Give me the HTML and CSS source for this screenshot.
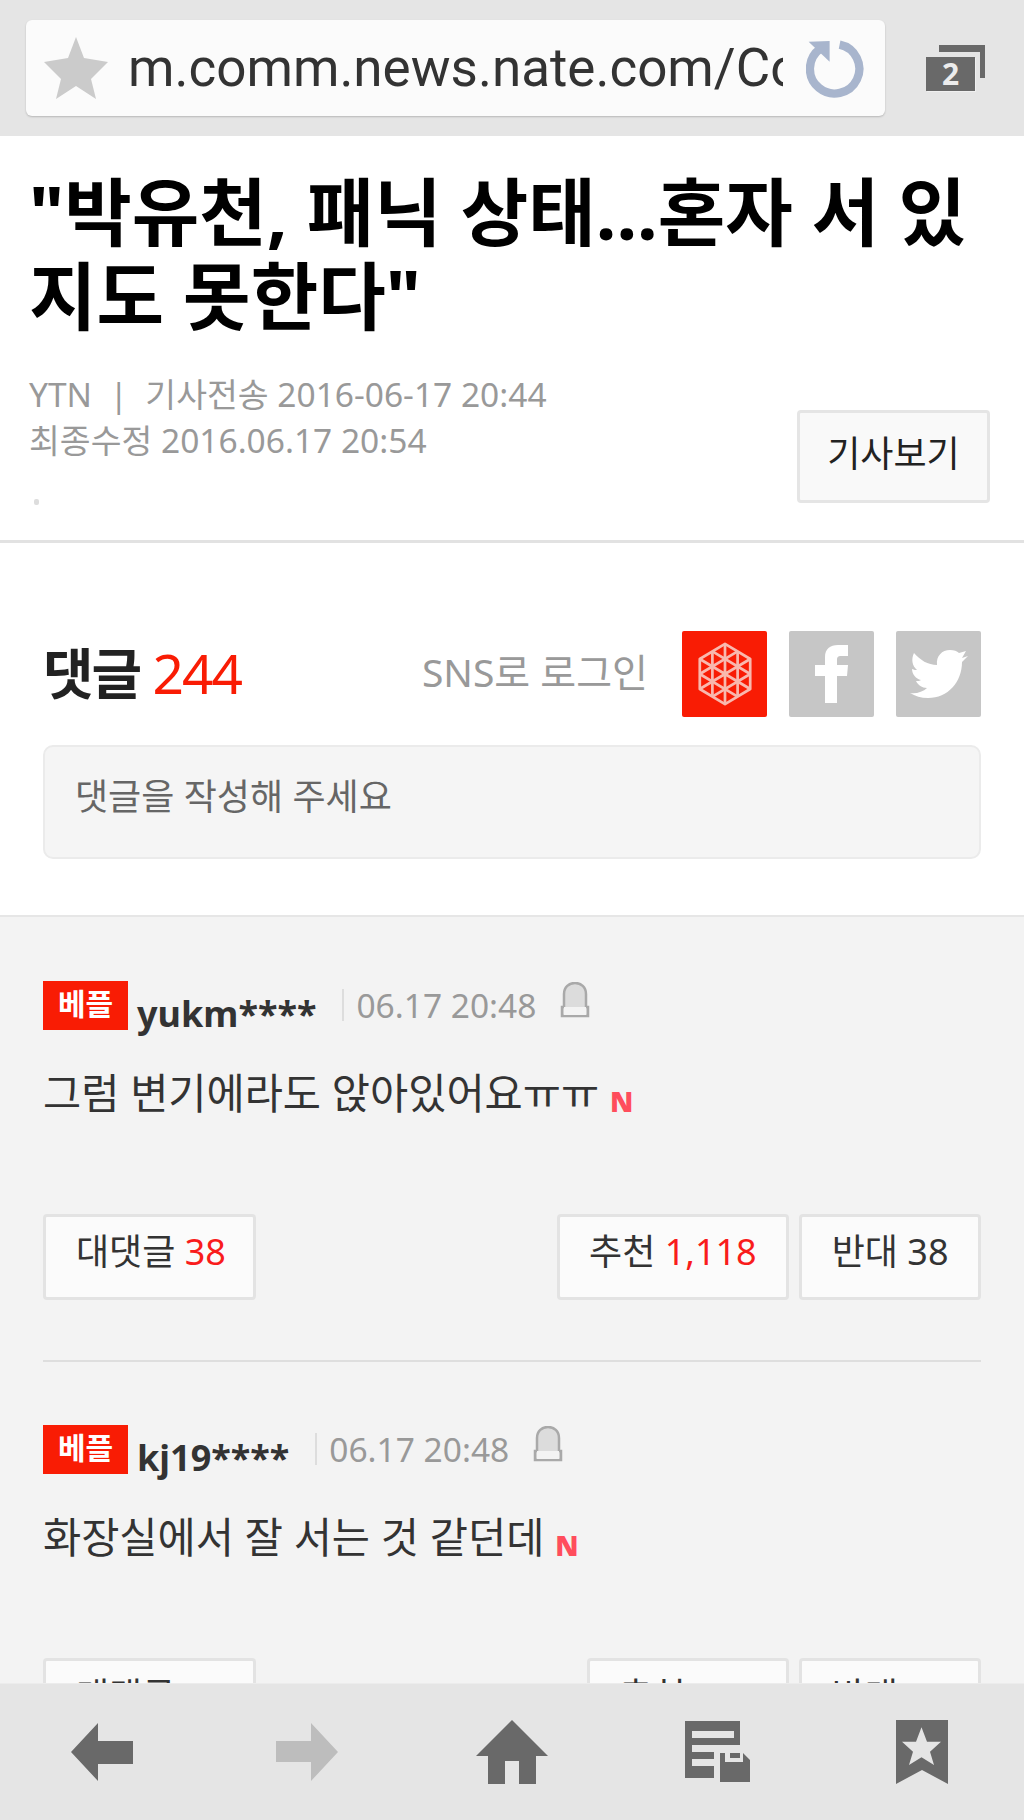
FILE: index.html
```html
<!DOCTYPE html>
<html lang="ko">
  <head>
    <meta charset="utf-8">
    <title>댓글</title>
    <link rel="stylesheet" href="styles.css">
  </head>

  <body>
    <div class="app">
      <!-- browser address bar -->
      <div class="topbar">
        <div class="urlbox">
          <svg class="star" viewBox="0 0 64 62"><path d="M32 0 40 21 64 25 47 42 52 62 32 49 12 62 17 42 0 25 24 21Z" /></svg>
          <div class="urltext">m.comm.news.nate.com/Co</div>
          <svg class="reload" viewBox="0 0 58 58"><path d="M33.600 4.600A24.700 24.700 0 1 1 14 8.900" fill="none" stroke="#a8b5cd" stroke-width="8.300" /><path d="M2.600 1.700 23.600 1V21.700Z" fill="#a8b5cd" /></svg>
        </div>
        <div class="tabs">
          <span class="tabback"></span>
          <span class="tabfront">2</span>
        </div>
      </div>

      <div class="content">
        <div class="article">
          <h1 class="title">"박유천, 패닉 상태...혼자 서 있지도 못한다"</h1>
          <div class="metarow">
            <div class="meta">
              <p>YTN &nbsp;|&nbsp; 기사전송 2016-06-17 20:44</p>
              <p>최종수정 2016.06.17 20:54</p>
              <span class="dot"></span>
            </div>
            <a class="viewbtn">기사보기</a>
          </div>
        </div>

        <div class="writebox">
          <div class="writehead">
            <div class="count">댓글 <em>244</em></div>
            <div class="sns">
              <span class="snslabel">SNS로 로그인</span>
              <span class="snsicon red">
                <svg width="56" height="64" viewBox="-2 -2 56 66" fill="none" stroke="#f9b8ae" stroke-width="2.800" stroke-linejoin="round">
                  <path d="M26 0 52 15.500V46.500L26 62 0 46.500V15.500Z" />
                  <path d="M26 0V62M0 15.500 52 46.500M52 15.500 0 46.500" />
                  <path d="M13 7.750V54.250M39 7.750V54.250" />
                  <path d="M0 31 39 7.750M13 54.250 52 31M52 31 13 7.750M39 54.250 0 31" />
                </svg>
              </span>
              <span class="snsicon">
                <svg width="34" height="58" viewBox="0 0 34 58"><path d="M10 58V31H0V20H10V12C10 4 15 0 23 0H33V11H26C23 11 22 12 22 15V20H33L32 31H22V58Z" fill="#fff" /></svg>
              </span>
              <span class="snsicon">
                <svg width="58" height="48" viewBox="0 0 58 48"><path d="M58 6 52 12C52 32 38 48 18 48 11 48 5 46 0 43 6 44 13 42 17 38 12 38 8 35 6 31 8 31 10 31 11 30 6 29 2 24 2 19 4 20 6 20 7 20 2 16 1 9 4 3 10 10 18 15 27 15 26 6 32 0 40 0 44 0 47 1 49 3L56 1 52 8 58 6Z" fill="#fff" /></svg>
              </span>
            </div>
          </div>
          <div class="writeinput">댓글을 작성해 주세요</div>
        </div>

        <div class="comments">
          <div class="comment">
            <div class="cmhead">
              <span class="badge">베플</span>
              <span class="name">yukm****</span>
              <span class="date">06.17 20:48</span>
              <svg class="lock" viewBox="0 0 30 36"><path d="M2 34V25H4V12C4 5 9 1 15 1S26 5 26 12V25H28V34Z" fill="#dcdcdc" stroke="#a9a9a9" stroke-width="2.500" /><path d="M4 25H26V33H4Z" fill="#f3f3f3" /></svg>
            </div>
            <p class="cmtext">그럼 변기에라도 앉아있어요ㅠㅠ <span class="newmark">N</span></p>
            <div class="cmbtns">
              <a class="btn reply">대댓글 <em>38</em></a>
              <a class="btn push">추천 <em>1,118</em></a>
              <a class="btn">반대 38</a>
            </div>
          </div>

          <div class="comment">
            <div class="cmhead">
              <span class="badge">베플</span>
              <span class="name">kj19****</span>
              <span class="date">06.17 20:48</span>
              <svg class="lock" viewBox="0 0 30 36"><path d="M2 34V25H4V12C4 5 9 1 15 1S26 5 26 12V25H28V34Z" fill="#dcdcdc" stroke="#a9a9a9" stroke-width="2.500" /><path d="M4 25H26V33H4Z" fill="#f3f3f3" /></svg>
            </div>
            <p class="cmtext">화장실에서 잘 서는 것 같던데 <span class="newmark">N</span></p>
            <div class="cmbtns">
              <a class="btn reply">대댓글 <em>12</em></a>
              <a class="btn push">추천 <em>879</em></a>
              <a class="btn">반대 25</a>
            </div>
          </div>
        </div>
      </div>

      <!-- browser bottom toolbar -->
      <div class="toolbar">
        <svg width="62" height="58" viewBox="0 0 62 58" fill="#696969"><path d="M0 29 27 0V18H62V41H27V58Z" /></svg>
        <svg width="62" height="58" viewBox="0 0 62 58" fill="#bdbdbd"><path d="M62 29 35 0V18H0V39H35V58Z" /></svg>
        <svg width="72" height="64" viewBox="0 0 72 64" fill="#696969"><path d="M36 0 72 36H60V64H43V41H29V64H12V36H0Z" /></svg>
        <svg class="docs" width="66" height="62" viewBox="0 0 66 62" fill="#696969">
          <path d="M0 0H55V24H7V31H29V38H7V45H29V57H0ZM7 10V17H49V10Z" fill-rule="evenodd" />
          <path d="M35 32H40V41H58V32L65 39V61H35ZM45 32V37H55V32Z" fill-rule="evenodd" />
          <path d="M45 32H55V37H45Z" />
        </svg>
        <svg width="52" height="64" viewBox="0 0 52 64" fill="#696969"><path d="M0 0H52V64L26 50 0 64ZM25.500 7.300 20 21.700H6L17 31.700 13 45 25.500 37.300 38 45 34 31.700 45 21.700H31Z" fill-rule="evenodd" /></svg>
      </div>
    </div>
  </body>
</html>
```

FILE: styles.css
```css
* {
  box-sizing: border-box;
}

body,
html {
  margin: 0;
  padding: 0;
  height: 100%;
  overflow: hidden;
  font-family: "Noto Sans", "Noto Sans CJK KR", sans-serif;
  background-color: #fff;
}

p {
  margin: 0;
}

em {
  font-style: normal;
}

.app {
  display: flex;
  flex-direction: column;
  height: 1820px;
}

/* address bar */
.topbar {
  flex: none;
  height: 136px;
  padding: 20px 39px 0 26px;
  display: flex;
  align-items: flex-start;
  justify-content: space-between;
  background-color: #e5e5e5;
}

.urlbox {
  width: 859px;
  height: 96px;
  padding: 0 22px 0 18px;
  display: flex;
  align-items: center;
  background-color: #fbfbfb;
  border-radius: 6px;
  box-shadow: 0 1px 2px rgba(0, 0, 0, 0.2);
}

.star {
  flex: none;
  width: 64px;
  height: 62px;
  fill: #cbcbcb;
}

.urltext {
  flex: none;
  width: 655px;
  margin-left: 20px;
  overflow: hidden;
  white-space: nowrap;
  font-family: Roboto, sans-serif;
  font-size: 53px;
  line-height: 62px;
  color: #333;
}

.reload {
  flex: none;
  width: 58px;
  height: 58px;
  margin: 2px 0 0 23px;
}

.tabs {
  position: relative;
  width: 59px;
  height: 46px;
  margin-top: 25px;
}

.tabback {
  position: absolute;
  top: 0;
  right: 0;
  width: 46px;
  height: 33px;
  border-top: 7px solid #696969;
  border-right: 5px solid #696969;
}

.tabfront {
  position: absolute;
  left: 0;
  bottom: 0;
  width: 49px;
  height: 34px;
  background-color: #696969;
  box-shadow: 1px 1px 0 #f0f0f0;
  color: #ececec;
  font-size: 30px;
  font-weight: 700;
  line-height: 34px;
  text-align: center;
}

.content {
  flex: 1;
  min-height: 0;
  overflow: hidden;
}

/* article head */
.article {
  padding: 34px 34px 0 29px;
  height: 407px;
  border-bottom: 3px solid #e2e2e2;
}

.title {
  margin: 0;
  font-size: 73.400px;
  line-height: 84px;
  font-weight: 700;
  color: #000;
}

.metarow {
  margin-top: 33px;
  display: flex;
  justify-content: space-between;
}

.meta {
  font-size: 33.500px;
  line-height: 46px;
  color: #999;
}

.dot {
  display: block;
  width: 5px;
  height: 6px;
  margin: 36px 0 0 5px;
  background-color: #ddd;
  border-radius: 2px;
}

.viewbtn {
  width: 193px;
  height: 93px;
  margin-top: 39px;
  border: 3px solid #e5e5e5;
  border-radius: 4px;
  background-color: #f9f9f9;
  text-align: center;
  font-size: 36px;
  line-height: 82px;
  color: #222;
}

/* write box */
.writebox {
  padding: 88px 43px 0;
  height: 374px;
  border-bottom: 2px solid #e6e6e6;
}

.writehead {
  height: 86px;
  display: flex;
  align-items: center;
  justify-content: space-between;
}

.count {
  padding-bottom: 9px;
  font-size: 55px;
  font-weight: 700;
  letter-spacing: -2px;
  color: #222;
}

.count em {
  font-weight: 400;
  color: #f91c04;
}

.sns {
  display: flex;
  align-items: center;
}

.snslabel {
  margin-right: 34px;
  padding-bottom: 8px;
  font-size: 39px;
  color: #999;
}

.snsicon {
  width: 85px;
  height: 86px;
  margin-left: 22px;
  display: flex;
  align-items: center;
  justify-content: center;
  background-color: #c6c6c6;
  border-radius: 2px;
}

.snsicon.red {
  margin-left: 0;
  background-color: #f91c04;
}

.writeinput {
  height: 114px;
  margin-top: 28px;
  padding: 0 30px;
  border: 2px solid #ebebeb;
  border-radius: 10px;
  background-color: #f5f5f5;
  font-size: 36px;
  line-height: 100px;
  color: #666;
}

/* comment list */
.comments {
  padding: 1px 43px 0;
  background-color: #f3f3f3;
}

.comment {
  padding: 63px 0 60px;
  border-bottom: 2px solid #dedede;
}

.cmhead {
  height: 49px;
  display: flex;
  align-items: flex-start;
}

.badge {
  width: 85px;
  height: 49px;
  background-color: #f91c04;
  color: #fff;
  font-size: 30px;
  font-weight: 700;
  line-height: 46px;
  text-align: center;
}

.name {
  margin-left: 9px;
  font-size: 36px;
  font-weight: 700;
  line-height: 66px;
  color: #333;
}

.date {
  margin: 8px 0 0 26px;
  padding-left: 12px;
  border-left: 2px solid #ddd;
  height: 32px;
  font-size: 33.500px;
  line-height: 32px;
  color: #999;
}

.lock {
  width: 30px;
  height: 36px;
  margin: 1px 0 0 24px;
}

.cmtext {
  margin-top: 34px;
  height: 150px;
  font-size: 41.500px;
  line-height: 58px;
  color: #333;
}

.newmark {
  font-size: 28px;
  font-weight: 900;
  vertical-align: -3px;
  color: #ff4d5c;
}

.cmbtns {
  display: flex;
  gap: 10px;
}

.btn {
  height: 86px;
  padding: 0 29.500px;
  border: 3px solid #e3e3e3;
  border-radius: 4px;
  background-color: #fbfbfb;
  font-size: 36px;
  line-height: 70px;
  color: #333;
}

.btn em {
  color: #f91c1c;
}

.reply {
  padding: 0 27px 0 30px;
}

.push {
  margin-left: auto;
}

/* bottom toolbar */
.toolbar {
  flex: none;
  height: 137px;
  display: grid;
  grid-template-columns: repeat(5, 1fr);
  justify-items: center;
  align-items: center;
  background-color: #e5e5e5;
  border-top: 1px solid #ececec;
}

.docs {
  margin-left: 3px;
}
```
